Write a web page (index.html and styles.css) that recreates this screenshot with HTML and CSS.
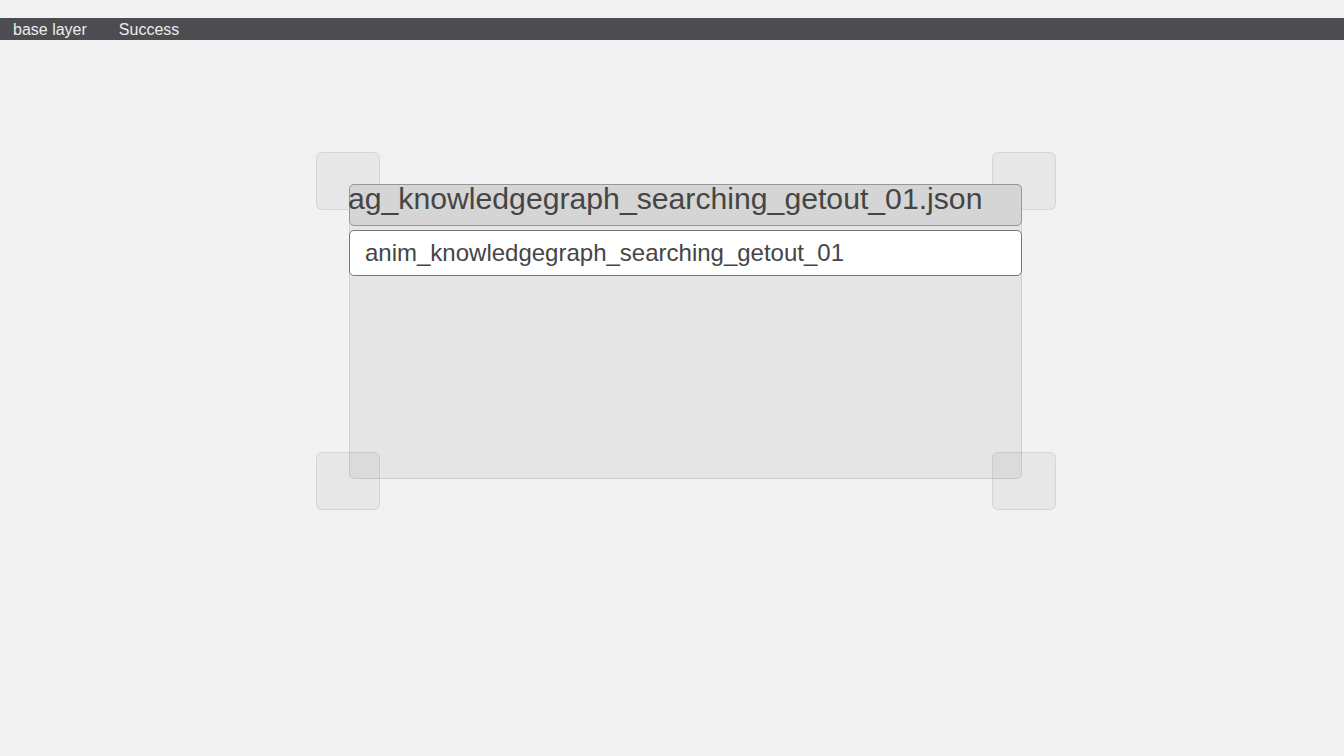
FILE: index.html
```html
<!DOCTYPE html>
<html>
<head>
<meta charset="utf-8">
<link rel="stylesheet" href="styles.css">
</head>
<body>
<div class="topbar">
  <span class="tab">base layer</span>
  <span class="tab">Success</span>
</div>
<div class="stage">
  <div class="handle h-tl"></div>
  <div class="handle h-tr"></div>
  <div class="panel">
    <div class="title">ag_knowledgegraph_searching_getout_01.json</div>
    <div class="field">anim_knowledgegraph_searching_getout_01</div>
  </div>
  <div class="handle h-bl"></div>
  <div class="handle h-br"></div>
</div>
</body>
</html>
```
FILE: styles.css
```css
html, body {
  margin: 0;
  padding: 0;
  background: #f2f2f2;
  font-family: "Liberation Sans", Arial, sans-serif;
}
body {
  width: 1344px;
  height: 756px;
  overflow: hidden;
}
.topbar {
  margin-top: 18px;
  height: 22px;
  background: #4d4c51;
  display: flex;
  align-items: center;
  gap: 32px;
  padding-left: 13px;
}
.tab {
  color: #ececec;
  font-size: 16px;
  line-height: 22px;
  padding-top: 2px;
}
.stage {
  position: relative;
  height: 716px;
  padding-top: 144px;
  box-sizing: border-box;
}
.panel {
  position: relative;
  z-index: 1;
  margin-left: 349px;
  width: 671px;
  height: 293px;
  background: rgba(0,0,0,0.05);
  border: 1px solid rgba(0,0,0,0.09);
  border-radius: 5px;
  display: flex;
  flex-direction: column;
  gap: 4px;
}
.title {
  margin: -1px -1px 0 -1px;
  height: 40px;
  background: #d5d5d5;
  border: 1px solid #979797;
  border-radius: 5px;
  color: #454545;
  font-size: 30.2px;
  line-height: 28px;
  white-space: nowrap;
  overflow: visible;
  text-indent: -2px;
}
.field {
  margin: 0 -1px;
  height: 44px;
  background: #fff;
  border: 1px solid #777;
  border-radius: 5px;
  color: #454545;
  font-size: 24px;
  line-height: 44px;
  padding-left: 15px;
  white-space: nowrap;
}
.handle {
  position: absolute;
  width: 62px;
  height: 56px;
  background: rgba(0,0,0,0.045);
  border: 1px solid rgba(0,0,0,0.08);
  border-radius: 6px;
}
.h-tl { left: 316px; top: 112px; }
.h-tr { left: 992px; top: 112px; }
.h-bl { left: 316px; top: 412px; z-index: 2; }
.h-br { left: 992px; top: 412px; z-index: 2; }
```
